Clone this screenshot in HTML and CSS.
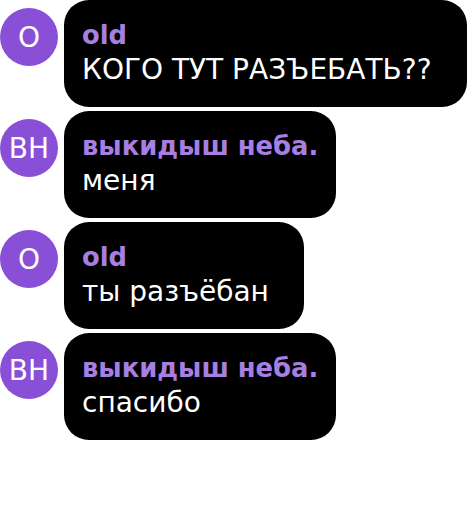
FILE: index.html
```html
<!DOCTYPE html>
<html lang="ru">
<head>
<meta charset="utf-8">
<link rel="stylesheet" href="styles.css">
</head>
<body>
<div class="chat">
  <div class="msg">
    <div class="avatar">O</div>
    <div class="bubble">
      <div class="name">old</div>
      <div class="text">КОГО ТУТ РАЗЪЕБАТЬ??</div>
    </div>
  </div>
  <div class="msg">
    <div class="avatar">ВН</div>
    <div class="bubble">
      <div class="name">выкидыш неба.</div>
      <div class="text">меня</div>
    </div>
  </div>
  <div class="msg">
    <div class="avatar">O</div>
    <div class="bubble">
      <div class="name">old</div>
      <div class="text">ты разъёбан</div>
    </div>
  </div>
  <div class="msg">
    <div class="avatar">ВН</div>
    <div class="bubble">
      <div class="name">выкидыш неба.</div>
      <div class="text">спасибо</div>
    </div>
  </div>
</div>
</body>
</html>
```
FILE: styles.css
```css
html, body {
  margin: 0;
  padding: 0;
  background: #ffffff;
}
body {
  font-family: "DejaVu Sans", sans-serif;
}
.chat {
  display: flex;
  flex-direction: column;
  gap: 4px;
}
.msg {
  display: flex;
  align-items: flex-start;
  gap: 6px;
}
.avatar {
  flex: none;
  width: 58px;
  height: 58px;
  margin-top: 8px;
  border-radius: 50%;
  background: #8a4fd7;
  color: #ffffff;
  font-size: 28px;
  display: flex;
  align-items: center;
  justify-content: center;
}
.bubble {
  background: #000000;
  color: #ffffff;
  border-radius: 25px;
  padding: 17px 18px 21px 18px;
}
.name {
  font-weight: bold;
  font-size: 25.8px;
  line-height: 36px;
  color: #a67fe0;
}
.text {
  font-size: 28px;
  line-height: 33px;
  padding-right: 17px;
}
```
